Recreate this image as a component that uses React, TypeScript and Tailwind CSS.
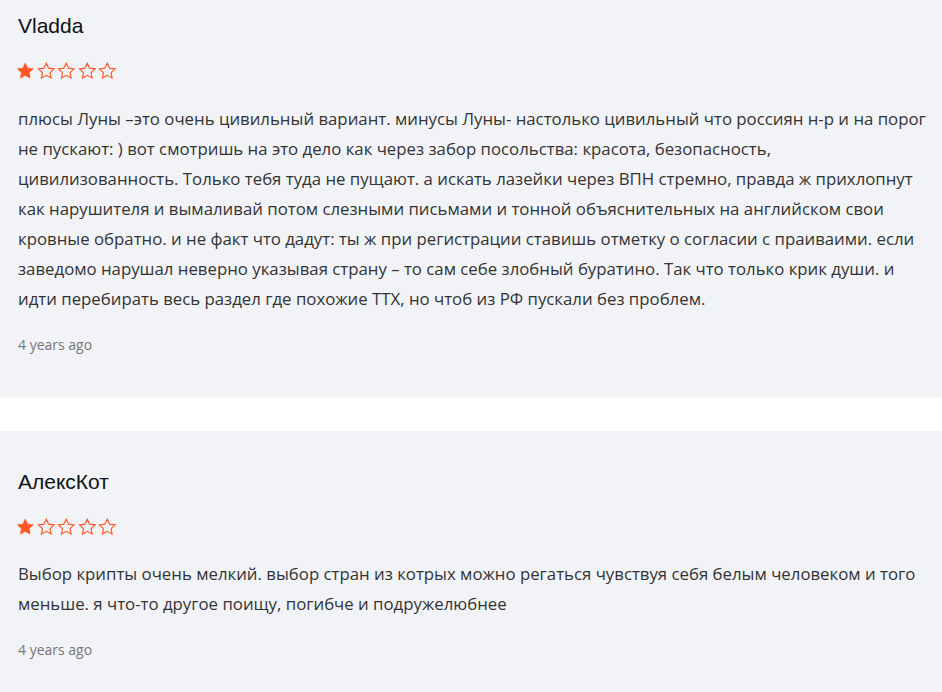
import React from "react";

function Star({ filled }: { filled: boolean }) {
  return (
    <svg width="18.5" height="17.5" viewBox="0 0 24 23" className="block">
      <path
        d="M12 1.5l3.09 6.6 7.16.86-5.28 4.95 1.38 7.09L12 17.5l-6.35 3.5 1.38-7.09L1.75 8.96l7.16-.86L12 1.5z"
        fill={filled ? "#ff5521" : "none"}
        stroke="#ff5521"
        strokeWidth={filled ? 1 : 1.5}
        strokeLinejoin="miter"
      />
    </svg>
  );
}

function Stars({ n }: { n: number }) {
  return (
    <div className="flex gap-[2px] mt-[22px] ml-[-2px]">
      {[0, 1, 2, 3, 4].map((i) => (
        <Star key={i} filled={i < n} />
      ))}
    </div>
  );
}

function Review({
  name,
  text,
  time,
}: {
  name: string;
  text: string;
  time: string;
}) {
  return (
    <div className="bg-[#f2f3f7] pl-[18px] pr-[16px] pt-[37px] pb-[42px] shadow-[0_2px_4px_rgba(0,0,0,0.03)]">
      <div className="font-['Liberation_Sans',Arial,sans-serif] text-[21px] leading-[28px] text-[#111]">
        {name}
      </div>
      <Stars n={1} />
      <p className="mt-[24px] font-['Open_Sans',sans-serif] text-[16.8px] leading-[30px] text-[#333]">
        {text}
      </p>
      <div className="mt-[21px] font-['Open_Sans',sans-serif] text-[14px] leading-[20px] text-[#777]">
        {time}
      </div>
    </div>
  );
}

export default function App() {
  return (
    <div className="bg-white w-[942px] h-[692px] overflow-hidden">
      <div className="flex flex-col gap-[34px] mt-[-25px]">
        <Review
          name="Vladda"
          text="плюсы Луны –это очень цивильный вариант. минусы Луны- настолько цивильный что россиян н-р и на порог не пускают: ) вот смотришь на это дело как через забор посольства: красота, безопасность, цивилизованность. Только тебя туда не пущают. а искать лазейки через ВПН стремно, правда ж прихлопнут как нарушителя и вымаливай потом слезными письмами и тонной объяснительных на английском свои кровные обратно. и не факт что дадут: ты ж при регистрации ставишь отметку о согласии с праиваими. если заведомо нарушал неверно указывая страну – то сам себе злобный буратино. Так что только крик души. и идти перебирать весь раздел где похожие ТТХ, но чтоб из РФ пускали без проблем."
          time="4 years ago"
        />
        <Review
          name="АлексКот"
          text="Выбор крипты очень мелкий. выбор стран из котрых можно регаться чувствуя себя белым человеком и того меньше. я что-то другое поищу, погибче и подружелюбнее"
          time="4 years ago"
        />
      </div>
    </div>
  );
}
